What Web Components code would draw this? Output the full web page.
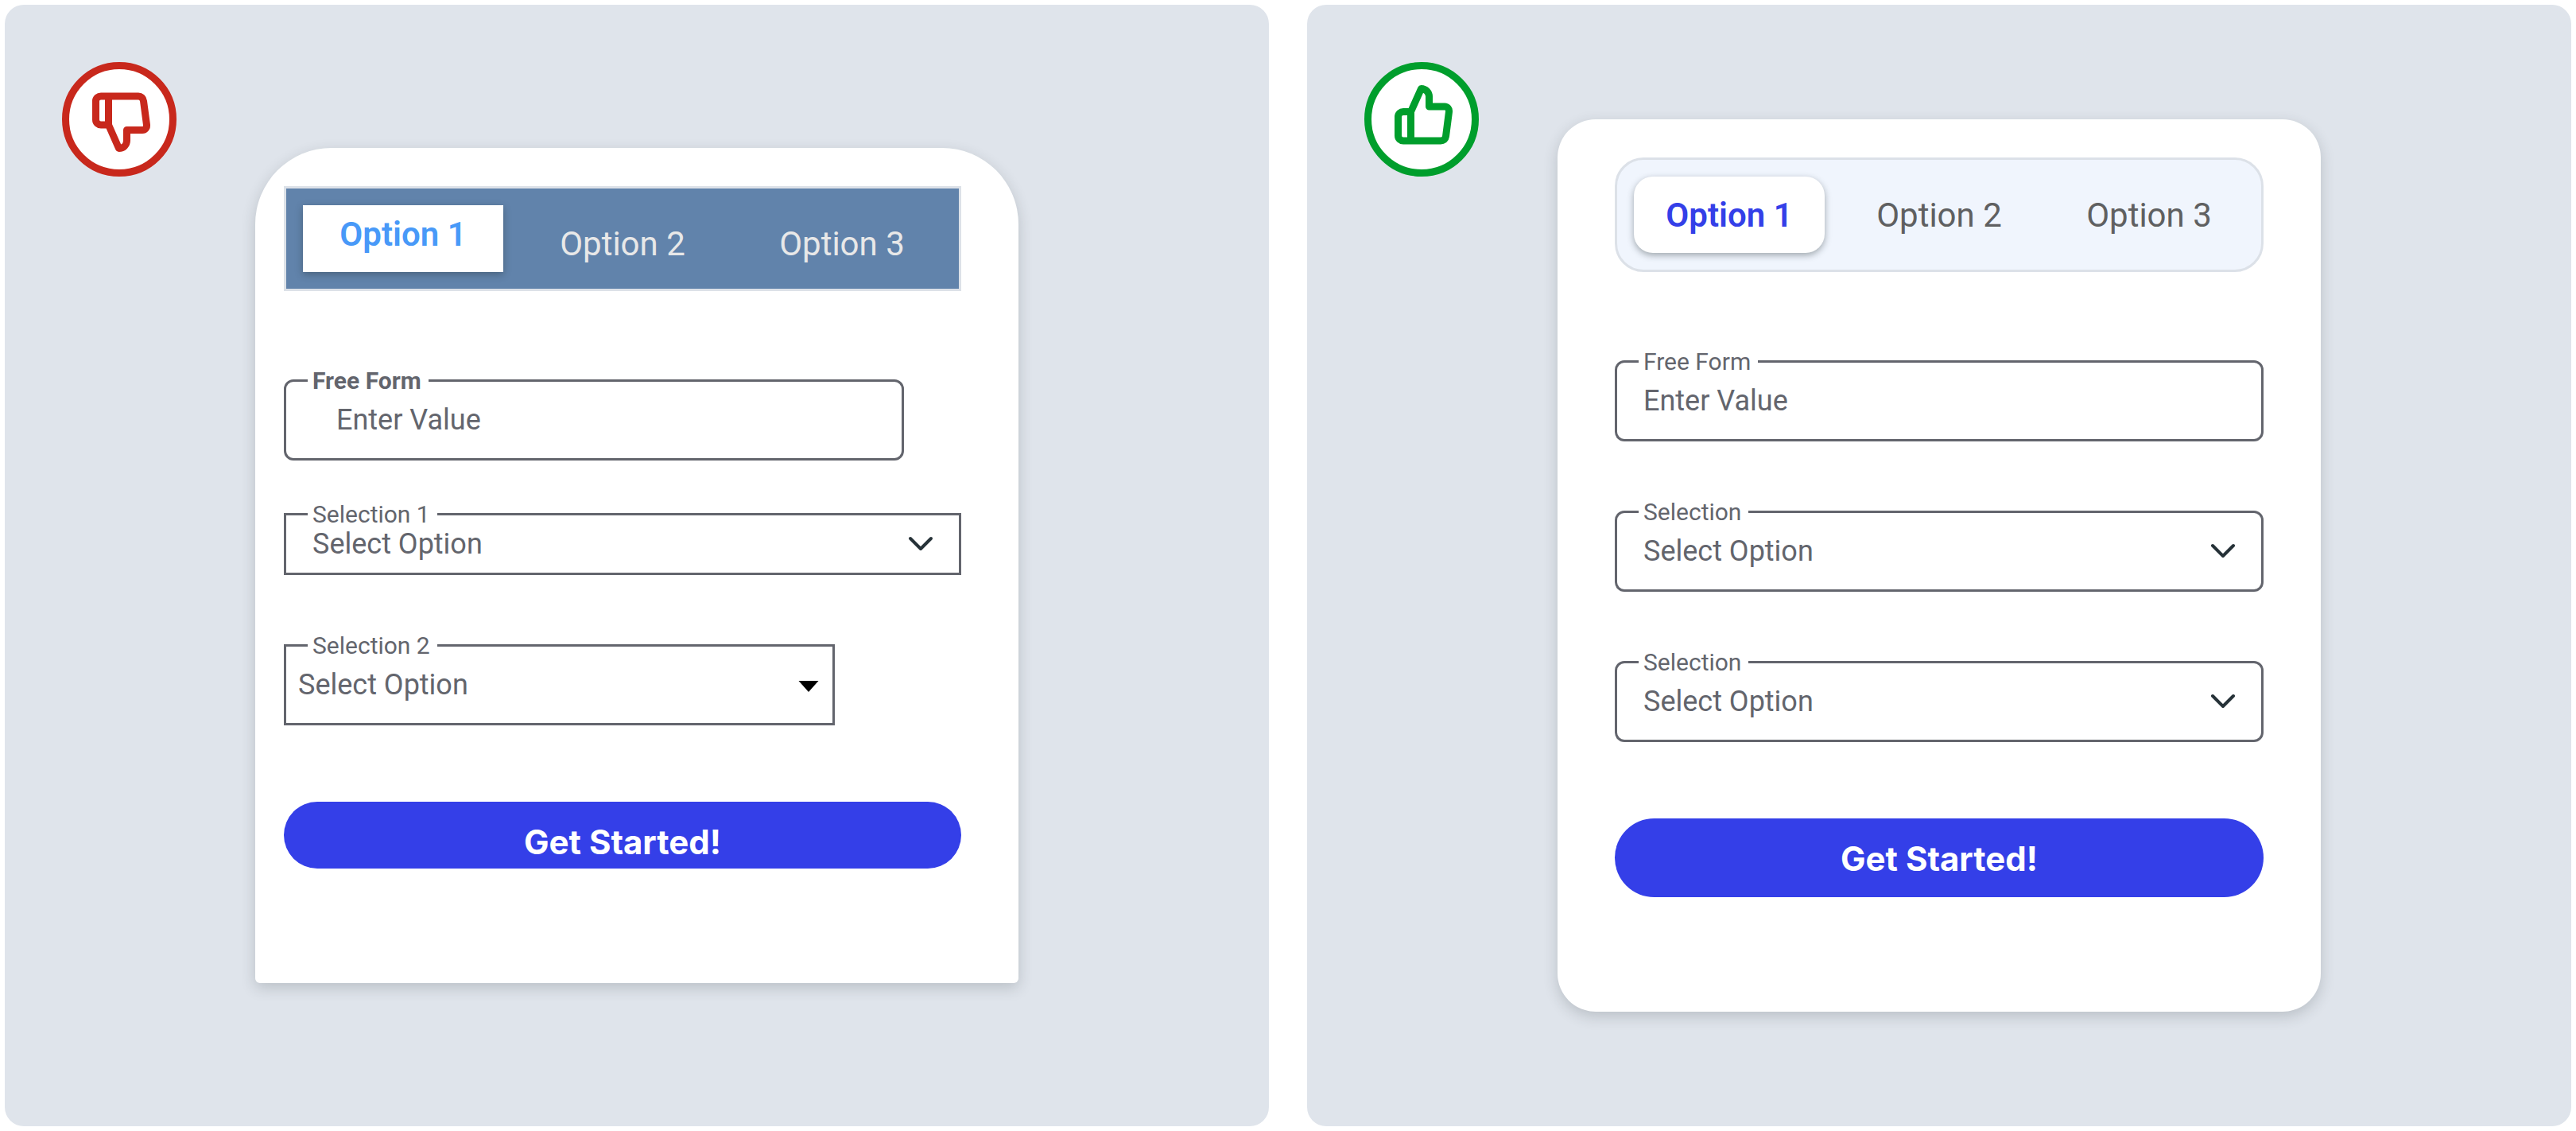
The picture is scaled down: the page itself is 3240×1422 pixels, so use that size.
<!DOCTYPE html>
<html lang="en">
<head>
<meta charset="utf-8">
<title>Form consistency: don't and do</title>
<style>
  html, body { margin: 0; min-height: 100%; background: #fff; }
  body { font-family: Roboto, "Liberation Sans", sans-serif; color: #63656d; }
</style>
</head>
<body>
<compare-board>
  <example-panel verdict="bad">
    <form-card look="bad">
      <tab-group look="bad"></tab-group>
      <text-field look="bad" label="Free Form" placeholder="Enter Value"></text-field>
      <select-field look="tight" label="Selection 1"></select-field>
      <select-field look="narrow" label="Selection 2" arrow="caret"></select-field>
      <action-button look="bad">Get Started!</action-button>
    </form-card>
  </example-panel>
  <example-panel verdict="good">
    <form-card>
      <tab-group></tab-group>
      <text-field label="Free Form" placeholder="Enter Value"></text-field>
      <select-field label="Selection"></select-field>
      <select-field label="Selection"></select-field>
      <action-button>Get Started!</action-button>
    </form-card>
  </example-panel>
</compare-board>

<script>
const define = (name, render) => customElements.define(name, class extends HTMLElement {
  connectedCallback() {
    if (this.shadowRoot) return;
    this.attachShadow({ mode: "open" }).innerHTML = render(this);
  }
});

define("compare-board", () => `
  <style>
    :host { display: block; }
    main { box-sizing: border-box; min-height: 100vh; padding: 6px; display: grid;
      grid-template-columns: 1fr 1fr; gap: 48px; }
  </style>
  <main><slot></slot></main>`);

define("example-panel", host => `
  <style>
    :host { display: grid; grid-template: 1fr / 1fr; background: #dfe4eb; border-radius: 24px; }
    verdict-badge { grid-area: 1 / 1; margin: 72px; place-self: start; }
    .stage { grid-area: 1 / 1; display: grid; place-items: center; }
  </style>
  <div class="stage"><slot></slot></div>
  <verdict-badge verdict="${host.getAttribute("verdict")}"></verdict-badge>`);

define("verdict-badge", host => {
  const good = host.getAttribute("verdict") === "good";
  return `
  <style>
    :host { display: block; width: 144px; height: 144px; }
    svg { display: block; width: 100%; height: 100%; }
  </style>
  <svg viewBox="0 0 144 144" role="img" aria-label="${good ? "Do" : "Don't"}" stroke="${good ? "#009e2c" : "#c8281c"}" stroke-width="9" stroke-linecap="round" stroke-linejoin="round" fill="none">
    <circle cx="72" cy="72" r="67.5" fill="#fff"/>
    ${good
      ? `<path d="M58.5 62.5V99M58.5 62.5L71.500 33.500C77.500 33.500 81.500 38.500 81.500 43.500V56H101C104.500 56 107 59 106.500 62.500L102.500 93.500C102 97 99.500 99 96 99H49C45.500 99 42.500 96.500 42.500 92.500V69C42.500 65 45.500 62.500 49 62.500H58.500"/>`
      : `<path d="M58.500 79V43M58.500 79L71.500 108.500C77.500 108.500 81.500 104 81.500 98.500V85.500H101C104.500 85.500 107 82.500 106.500 79L102.500 49C102 45 99.500 43 96 43H49C45.500 43 42.500 45.500 42.500 49V72.500C42.500 76.500 45.500 79 49 79H58.500"/>`}
  </svg>`;
});

define("form-card", () => `
  <style>
    :host { display: flex; flex-direction: column; box-sizing: border-box; width: 960px; max-width: 100%;
      padding: 48px 72px 144px; border-radius: 48px; background: #fff;
      box-shadow: 0 6px 18px rgba(38, 50, 56, .2); }
    :host([look="bad"]) { padding: 48px 72px 144px 36px; border-radius: 96px 96px 6px 6px; }
  </style>
  <slot></slot>`);

define("tab-group", () => `
  <style>
    :host { display: block; }
    div { display: grid; grid-template-columns: repeat(3, 1fr); gap: 24px; padding: 21px;
      border: 3px solid #dce1e8; border-radius: 36px; background: #f0f5fd; }
    button { box-sizing: border-box; height: 96px; margin: 0; padding: 2px 0 0; border: 0; background: none;
      font: 400 42px/48px Roboto, "Liberation Sans", sans-serif; color: #5f6061; }
    button[aria-selected="true"] { background: #fff; border-radius: 24px; color: #343fe8; font-weight: 600;
      box-shadow: 0 3px 9px rgba(38, 50, 56, .4); }
    :host([look="bad"]) div { border-radius: 0; background: #6183ab; }
    :host([look="bad"]) button { height: 84px; padding-top: 14px; color: #e8e8e8; }
    :host([look="bad"]) button[aria-selected="true"] { padding: 0 0 10px; border-radius: 0; color: #4899f8; }
  </style>
  <div role="tablist">
    <button role="tab" aria-selected="true">Option 1</button>
    <button role="tab" aria-selected="false">Option 2</button>
    <button role="tab" aria-selected="false">Option 3</button>
  </div>`);

const fieldStyle = `
    :host { display: block; margin-top: 87px; }
    .field { position: relative; display: grid; grid-template: 1fr / 1fr; height: 96px;
      border: 3px solid #63656d; border-radius: 12px; }
    label { position: absolute; left: 27px; top: -19px; padding: 0 9px 0 6px; background: #fff;
      font-size: 30px; line-height: 36px; color: #63656d; }
    input, select { grid-area: 1 / 1; box-sizing: border-box; width: 100%; margin: 0; padding: 0 33px; border: 0;
      border-radius: 9px; background: none; appearance: none; outline: 0;
      font: 400 36px/42px Roboto, "Liberation Sans", sans-serif; color: #63656d; }
    input::placeholder { color: #63656d; opacity: 1; }`;

define("text-field", host => `
  <style>${fieldStyle}
    :host { margin-top: 111px; }
    :host([look="bad"]) { margin-right: 72px; }
    :host([look="bad"]) input { padding-left: 63px; }
    :host([look="bad"]) label { font-weight: 700; }
  </style>
  <div class="field">
    <input id="control" type="text" placeholder="${host.getAttribute("placeholder")}">
    <label for="control">${host.getAttribute("label")}</label>
  </div>`);

define("select-field", host => `
  <style>${fieldStyle}
    svg { grid-area: 1 / 1; place-self: center end; margin-right: 30px; pointer-events: none; }
    :host([look]) .field, :host([look]) select { border-radius: 0; }
    :host([look="tight"]) { margin-top: 66px; }
    :host([look="tight"]) .field { height: 72px; }
    :host([look="narrow"]) { margin-right: 159px; }
    :host([look="narrow"]) select { padding-left: 15px; }
    :host([look="narrow"]) svg { margin-right: 12px; }
  </style>
  <div class="field">
    <select id="control"><option>Select Option</option></select>
    <label for="control">${host.getAttribute("label")}</label>
    <svg width="36" height="36" viewBox="0 0 36 36" aria-hidden="true">${
      host.getAttribute("arrow") === "caret"
        ? `<path d="M5.500 13h25L18 27z" fill="#000"/>`
        : `<path d="M5 11l13 13 13-13" fill="none" stroke="#263238" stroke-width="4" stroke-linecap="round" stroke-linejoin="round"/>`}</svg>
  </div>`);

define("action-button", () => `
  <style>
    :host { display: block; margin-top: 96px; }
    button { display: block; box-sizing: border-box; width: 100%; height: 99px; margin: 0; padding: 2px 0 0; border: 0;
      border-radius: 50px; background: #343fe8; color: #fff; font: 700 42px/48px Inter, Roboto, sans-serif; }
    :host([look="bad"]) button { height: 84px; padding-top: 18px; }
  </style>
  <button type="button"><slot></slot></button>`);
</script>
</body>
</html>
